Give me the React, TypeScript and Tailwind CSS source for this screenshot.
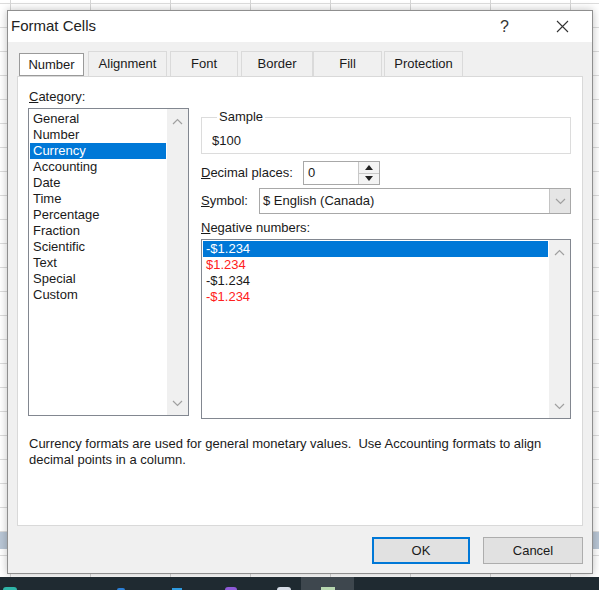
import React from 'react';

const categories = ['General', 'Number', 'Currency', 'Accounting', 'Date', 'Time', 'Percentage', 'Fraction', 'Scientific', 'Text', 'Special', 'Custom'];

const negatives = [
  { label: '-$1.234', red: false },
  { label: '$1.234', red: true },
  { label: '-$1.234', red: false },
  { label: '-$1.234', red: true },
];

const tabs = [
  { label: 'Number', cls: 'ml-[2px] w-[65px]' },
  { label: 'Alignment', cls: 'ml-[4px] w-[79px]' },
  { label: 'Font', cls: 'ml-[3px] w-[68px]' },
  { label: 'Border', cls: 'ml-[3px] w-[72px]' },
  { label: 'Fill', cls: 'ml-0 w-[69px]' },
  { label: 'Protection', cls: 'ml-[2px] w-[79px]' },
];

function Chevron({ up }: { up?: boolean }) {
  return (
    <svg width="11" height="7" viewBox="0 0 11 7" fill="none">
      <polyline
        points={up ? '1,6 5.5,1.5 10,6' : '1,1 5.5,5.5 10,1'}
        stroke="#a0a0a0"
        strokeWidth="1.2"
      />
    </svg>
  );
}

function Scrollbar() {
  return (
    <div className="w-[21px] bg-[#f0f0f0] flex flex-col items-center justify-between pt-[9px] pb-[8px]">
      <Chevron up />
      <Chevron />
    </div>
  );
}

export default function App() {
  return (
    <div className="w-[599px] h-[590px] overflow-hidden flex flex-col font-['Liberation_Sans',Arial,sans-serif] text-[13px] text-[#1a1a1a] bg-white bg-[linear-gradient(to_bottom,transparent_532px,#b9c6d5_532px,#b9c6d5_549px,transparent_549px),linear-gradient(to_right,#d6d6d6_1px,transparent_1px),linear-gradient(to_bottom,#dcdcdc_1px,transparent_1px)] bg-[size:100%_100%,80px_100%,100%_24px] bg-[position:0_0,10px_0,0_3px]">
      {/* Dialog */}
      <div className="mt-[10px] ml-[7px] w-[586px] h-[564px] border border-[#8f8f8f] bg-[#f0f0f0] flex flex-col shadow-[0_0_8px_rgba(0,0,0,0.25)]">
        {/* Title bar */}
        <div className="h-[31px] bg-white flex items-center pl-[3px]">
          <span className="text-[15px] text-[#222]">Format Cells</span>
          <span className="ml-auto text-[16px] text-[#333] mr-[47px]">?</span>
          <svg width="13" height="13" viewBox="0 0 13 13" className="mr-[23px]">
            <path d="M1 1L12 12M12 1L1 12" stroke="#333" strokeWidth="1.1" />
          </svg>
        </div>

        {/* Body */}
        <div className="flex-1 flex flex-col px-[9px] pt-[9px]">
          {/* Tabs */}
          <div className="flex items-end h-[25px]">
            {tabs.map((t, i) =>
              i === 0 ? (
                <div
                  key={t.label}
                  className={`${t.cls} h-[23px] bg-white border border-[#9a9a9a] flex items-center justify-center text-[13px]`}
                >
                  {t.label}
                </div>
              ) : (
                <div
                  key={t.label}
                  className={`${t.cls} h-[25px] bg-[#f0f0f0] border border-b-0 border-[#dadada] flex items-center justify-center text-[13px]`}
                >
                  {t.label}
                </div>
              )
            )}
          </div>

          {/* Tab panel */}
          <div className="h-[450px] bg-white border border-[#d9d9d9] flex flex-col pl-[10px] pr-[8px]">
            <div className="flex">
              {/* Category column */}
              <div className="flex flex-col pt-[12px] w-[161px]">
                <div className="h-[16px] leading-[16px] pl-[1px]">
                  <span className="underline">C</span>ategory:
                </div>
                <div className="mt-[3px] h-[308px] border border-[#828790] flex">
                  <div className="flex-1 flex flex-col pt-[2px] px-[1px]">
                    {categories.map(c => (
                      <div
                        key={c}
                        className={`h-[16px] leading-[16px] pl-[3px] ${c === 'Currency' ? 'bg-[#0078d7] text-white' : ''}`}
                      >
                        {c}
                      </div>
                    ))}
                  </div>
                  <Scrollbar />
                </div>
              </div>

              {/* Right column */}
              <div className="ml-[12px] w-[370px] flex flex-col pt-[32px]">
                <fieldset className="border border-[#dcdcdc] pl-[10px] pt-[8px] pb-[4px]">
                  <legend className="ml-[5px] px-[2px] h-[16px] leading-[16px]">Sample</legend>
                  <div className="h-[16px] leading-[16px]">$100</div>
                </fieldset>

                <div className="mt-[7px] flex items-center">
                  <div className="w-[102px]">
                    <span className="underline">D</span>ecimal places:
                  </div>
                  <div className="w-[77px] h-[24px] border border-[#a8a8a8] flex">
                    <div className="flex-1 pl-[4px] flex items-center">0</div>
                    <div className="w-[21px] flex flex-col border-l border-[#c8c8c8] bg-[#f4f4f4]">
                      <div className="flex-1 flex items-center justify-center border-b border-[#c8c8c8]">
                        <svg width="8" height="5" viewBox="0 0 8 5"><path d="M0 5L4 0L8 5Z" fill="#222" /></svg>
                      </div>
                      <div className="flex-1 flex items-center justify-center">
                        <svg width="8" height="5" viewBox="0 0 8 5"><path d="M0 0L4 5L8 0Z" fill="#222" /></svg>
                      </div>
                    </div>
                  </div>
                </div>

                <div className="mt-[3px] flex items-center">
                  <div className="w-[58px]">
                    <span className="underline">S</span>ymbol:
                  </div>
                  <div className="w-[312px] h-[26px] border border-[#a8a8a8] flex">
                    <div className="flex-1 pl-[3px] flex items-center">$ English (Canada)</div>
                    <div className="w-[21px] bg-[#e5e5e5] border-l border-[#c4c4c4] flex items-center justify-center">
                      <Chevron />
                    </div>
                  </div>
                </div>

                <div className="mt-[6px] h-[16px] leading-[16px]">
                  <span className="underline">N</span>egative numbers:
                </div>

                <div className="mt-[3px] h-[180px] border border-[#828790] flex">
                  <div className="flex-1 flex flex-col pt-[1px] px-[1px]">
                    {negatives.map((n, i) => (
                      <div
                        key={i}
                        className={`h-[16px] leading-[16px] pl-[3px] ${
                          i === 0 ? 'bg-[#0078d7] text-white' : n.red ? 'text-[#ff2020]' : ''
                        }`}
                      >
                        {n.label}
                      </div>
                    ))}
                  </div>
                  <Scrollbar />
                </div>
              </div>
            </div>

            <p className="mt-[17px] leading-[16px] pl-[1px]">
              Currency formats are used for general monetary values.&nbsp; Use Accounting formats to align
              <br />
              decimal points in a column.
            </p>
          </div>

          {/* Buttons */}
          <div className="mt-[11px] flex justify-end gap-[13px]">
            <button className="w-[98px] h-[27px] bg-[#e1e1e1] border-2 border-[#0078d7] text-[13px]">OK</button>
            <button className="w-[100px] h-[27px] bg-[#e1e1e1] border border-[#adadad] text-[13px]">Cancel</button>
          </div>
        </div>
      </div>

      {/* Taskbar */}
      <div className="mt-auto h-[13px] bg-[#1f2a31] flex items-end">
        <div className="ml-[3px] w-[14px] h-[3px] rounded-t-full bg-[#2fb5a8]" />
        <div className="ml-[100px] w-[8px] h-[2px] rounded-t-full bg-[#2b7fd6]" />
        <div className="ml-[47px] w-[10px] h-[2px] bg-[#2f9be0]" />
        <div className="ml-[43px] w-[12px] h-[3px] rounded-t-full bg-[#8e5ad8]" />
        <div className="ml-[40px] w-[14px] h-[3px] rounded-t-full bg-[#d6dce6]" />
        <div className="ml-[10px] w-[53px] h-[13px] bg-[#3e474e] flex items-end justify-center">
          <div className="w-[14px] h-[3px] bg-[#b7d7b0]" />
        </div>
      </div>
    </div>
  );
}
